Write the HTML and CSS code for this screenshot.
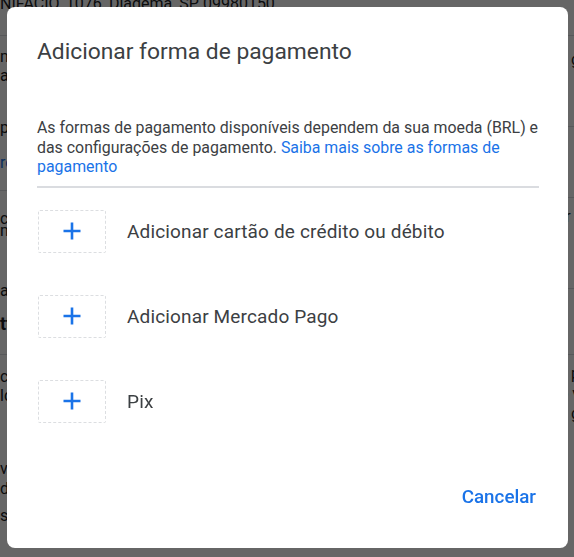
FILE: index.html
```html
<!DOCTYPE html>
<html lang="pt-BR">
<head>
<meta charset="utf-8">
<title>Adicionar forma de pagamento</title>
<link rel="stylesheet" href="styles.css">
</head>
<body>
<div class="page">
  <div class="addr">ENIFACIO, 1076, Diadema, SP 09980150</div>
  <div class="cols">
    <div class="col left">
      <section class="sec s1">
        <p class="t1">mmmm</p>
        <p class="t2">aaaa</p>
        <p class="t3">pagamento</p>
        <p class="t4 link">remover</p>
      </section>
      <section class="sec s2">
        <p class="t5">como</p>
        <p class="t6">mmmm</p>
        <p class="t7">ação</p>
        <p class="t8 bold">tttt</p>
      </section>
      <section class="sec s3">
        <p class="t9">cccc</p>
        <p class="t10">lclc</p>
        <p class="t11">vvvv</p>
        <p class="t12">dddd</p>
        <p class="t13">ssss</p>
      </section>
    </div>
    <div class="col right">
      <section class="rsec r1"><p class="rt1">pagamento g</p></section>
      <section class="rsec r2"></section>
      <section class="rsec r3"><p class="rt2">mostrar r</p></section>
      <section class="rsec r4"></section>
      <section class="rsec r5">
        <p class="rt3">exemplo p</p>
        <p class="rt4">novo v</p>
        <p class="rt5">pagamento g</p>
      </section>
    </div>
  </div>
</div>

<div class="overlay">
  <div class="dialog" role="dialog" aria-labelledby="dlg-title">
    <h1 id="dlg-title" class="title">Adicionar forma de pagamento</h1>
    <p class="desc">As formas de pagamento disponíveis dependem da sua moeda (BRL) e das configurações de pagamento. <a class="link-blue" href="#">Saiba mais sobre as formas de pagamento</a></p>
    <div class="divider"></div>
    <ul class="options">
      <li class="option">
        <span class="addbox">
          <svg width="18" height="18" viewBox="0 0 18 18" aria-hidden="true"><path d="M9 0.5v17M0.5 9h17" stroke="#1a73e8" stroke-width="2.6" fill="none"/></svg>
        </span>
        <span class="label">Adicionar cartão de crédito ou débito</span>
      </li>
      <li class="option">
        <span class="addbox">
          <svg width="18" height="18" viewBox="0 0 18 18" aria-hidden="true"><path d="M9 0.5v17M0.5 9h17" stroke="#1a73e8" stroke-width="2.6" fill="none"/></svg>
        </span>
        <span class="label">Adicionar Mercado Pago</span>
      </li>
      <li class="option">
        <span class="addbox">
          <svg width="18" height="18" viewBox="0 0 18 18" aria-hidden="true"><path d="M9 0.5v17M0.5 9h17" stroke="#1a73e8" stroke-width="2.6" fill="none"/></svg>
        </span>
        <span class="label">Pix</span>
      </li>
    </ul>
    <div class="actions">
      <button class="btn-text" type="button">Cancelar</button>
    </div>
  </div>
</div>
</body>
</html>
```
FILE: styles.css
```css
html, body {
  margin: 0;
  padding: 0;
  width: 574px;
  height: 557px;
  overflow: hidden;
  background: #fff;
  font-family: Roboto, "Liberation Sans", sans-serif;
}

/* background page */
.page {
  color: #202124;
  font-size: 16px;
}
.addr {
  margin-top: -6px;
  height: 42px;
  box-sizing: border-box;
  text-indent: -9px;
  line-height: 20px;
  border-bottom: 1px solid #dadce0;
  white-space: nowrap;
}
.cols {
  display: grid;
  grid-template-columns: 300px 274px;
}
.col p {
  margin: 0;
  line-height: 20px;
  white-space: nowrap;
}
.sec { border-bottom: 1px solid #dadce0; box-sizing: border-box; }
.s1 { height: 155px; padding-top: 11px; }
.s1 .t2 { margin-top: -1px; }
.s1 .t3 { margin-top: 32px; }
.s1 .t4 { margin-top: 15px; }
.link { color: #1a73e8; }
.s2 { height: 164px; padding-top: 18px; }
.s2 .t6 { margin-top: -8px; }
.s2 .t7 { margin-top: 40px; }
.s2 .t8 { margin-top: 13px; font-weight: 700; font-size: 18px; }
.s3 { border-bottom: 0; padding-top: 12px; }
.s3 .t10 { margin-top: -1px; }
.s3 .t11 { margin-top: 53px; }
.s3 .t13 { margin-top: 7px; }

.right p { text-align: right; margin-right: -6px; }
.rsec { border-bottom: 1px solid #dadce0; box-sizing: border-box; }
.r1 { height: 91px; padding-top: 14px; }
.r2 { height: 71px; }
.r3 { height: 91px; padding-top: 9px; }
.r4 { height: 66px; }
.r5 { border-bottom: 0; padding-top: 9px; }
.rt4 { margin-top: 74px; }

/* overlay + dialog */
.overlay {
  position: fixed;
  inset: 0;
  background: rgba(0, 0, 0, 0.6);
  display: flex;
  padding: 7px 6px 9px 7px;
}
.dialog {
  flex: 1;
  background: #fff;
  border-radius: 8px;
  padding: 30px 29px 0 30px;
  display: flex;
  flex-direction: column;
  color: #3c4043;
}
.title {
  margin: 0;
  font-family: Roboto, "Liberation Sans", sans-serif;
  font-weight: 400;
  font-size: 22.8px;
  line-height: 30px;
  color: #3c4043;
}
.desc {
  margin: 51px 0 0;
  font-size: 15.9px;
  line-height: 19.5px;
  color: #3c4043;
}
.link-blue {
  color: #1a73e8;
  text-decoration: none;
}
.divider {
  height: 2px;
  background: #dadce0;
  margin-top: 9px;
}
.options {
  list-style: none;
  margin: 22px 0 0;
  padding: 0;
  display: flex;
  flex-direction: column;
  gap: 42px;
}
.option {
  display: flex;
  align-items: center;
  gap: 21px;
}
.addbox {
  width: 68px;
  height: 43px;
  box-sizing: border-box;
  border: 1.5px dashed #dcdee1;
  border-radius: 2px;
  display: flex;
  align-items: center;
  justify-content: center;
  margin-left: 1px;
}
.label {
  font-size: 19px;
  letter-spacing: 0.15px;
  color: #3c4043;
}
.actions {
  margin-top: auto;
  display: flex;
  justify-content: flex-end;
  padding-bottom: 40px;
}
.btn-text {
  background: none;
  border: 0;
  padding: 0 3px 0 0;
  font-family: Roboto, "Liberation Sans", sans-serif;
  font-size: 18.8px;
  font-weight: 500;
  color: #1a73e8;
  cursor: pointer;
}
```
